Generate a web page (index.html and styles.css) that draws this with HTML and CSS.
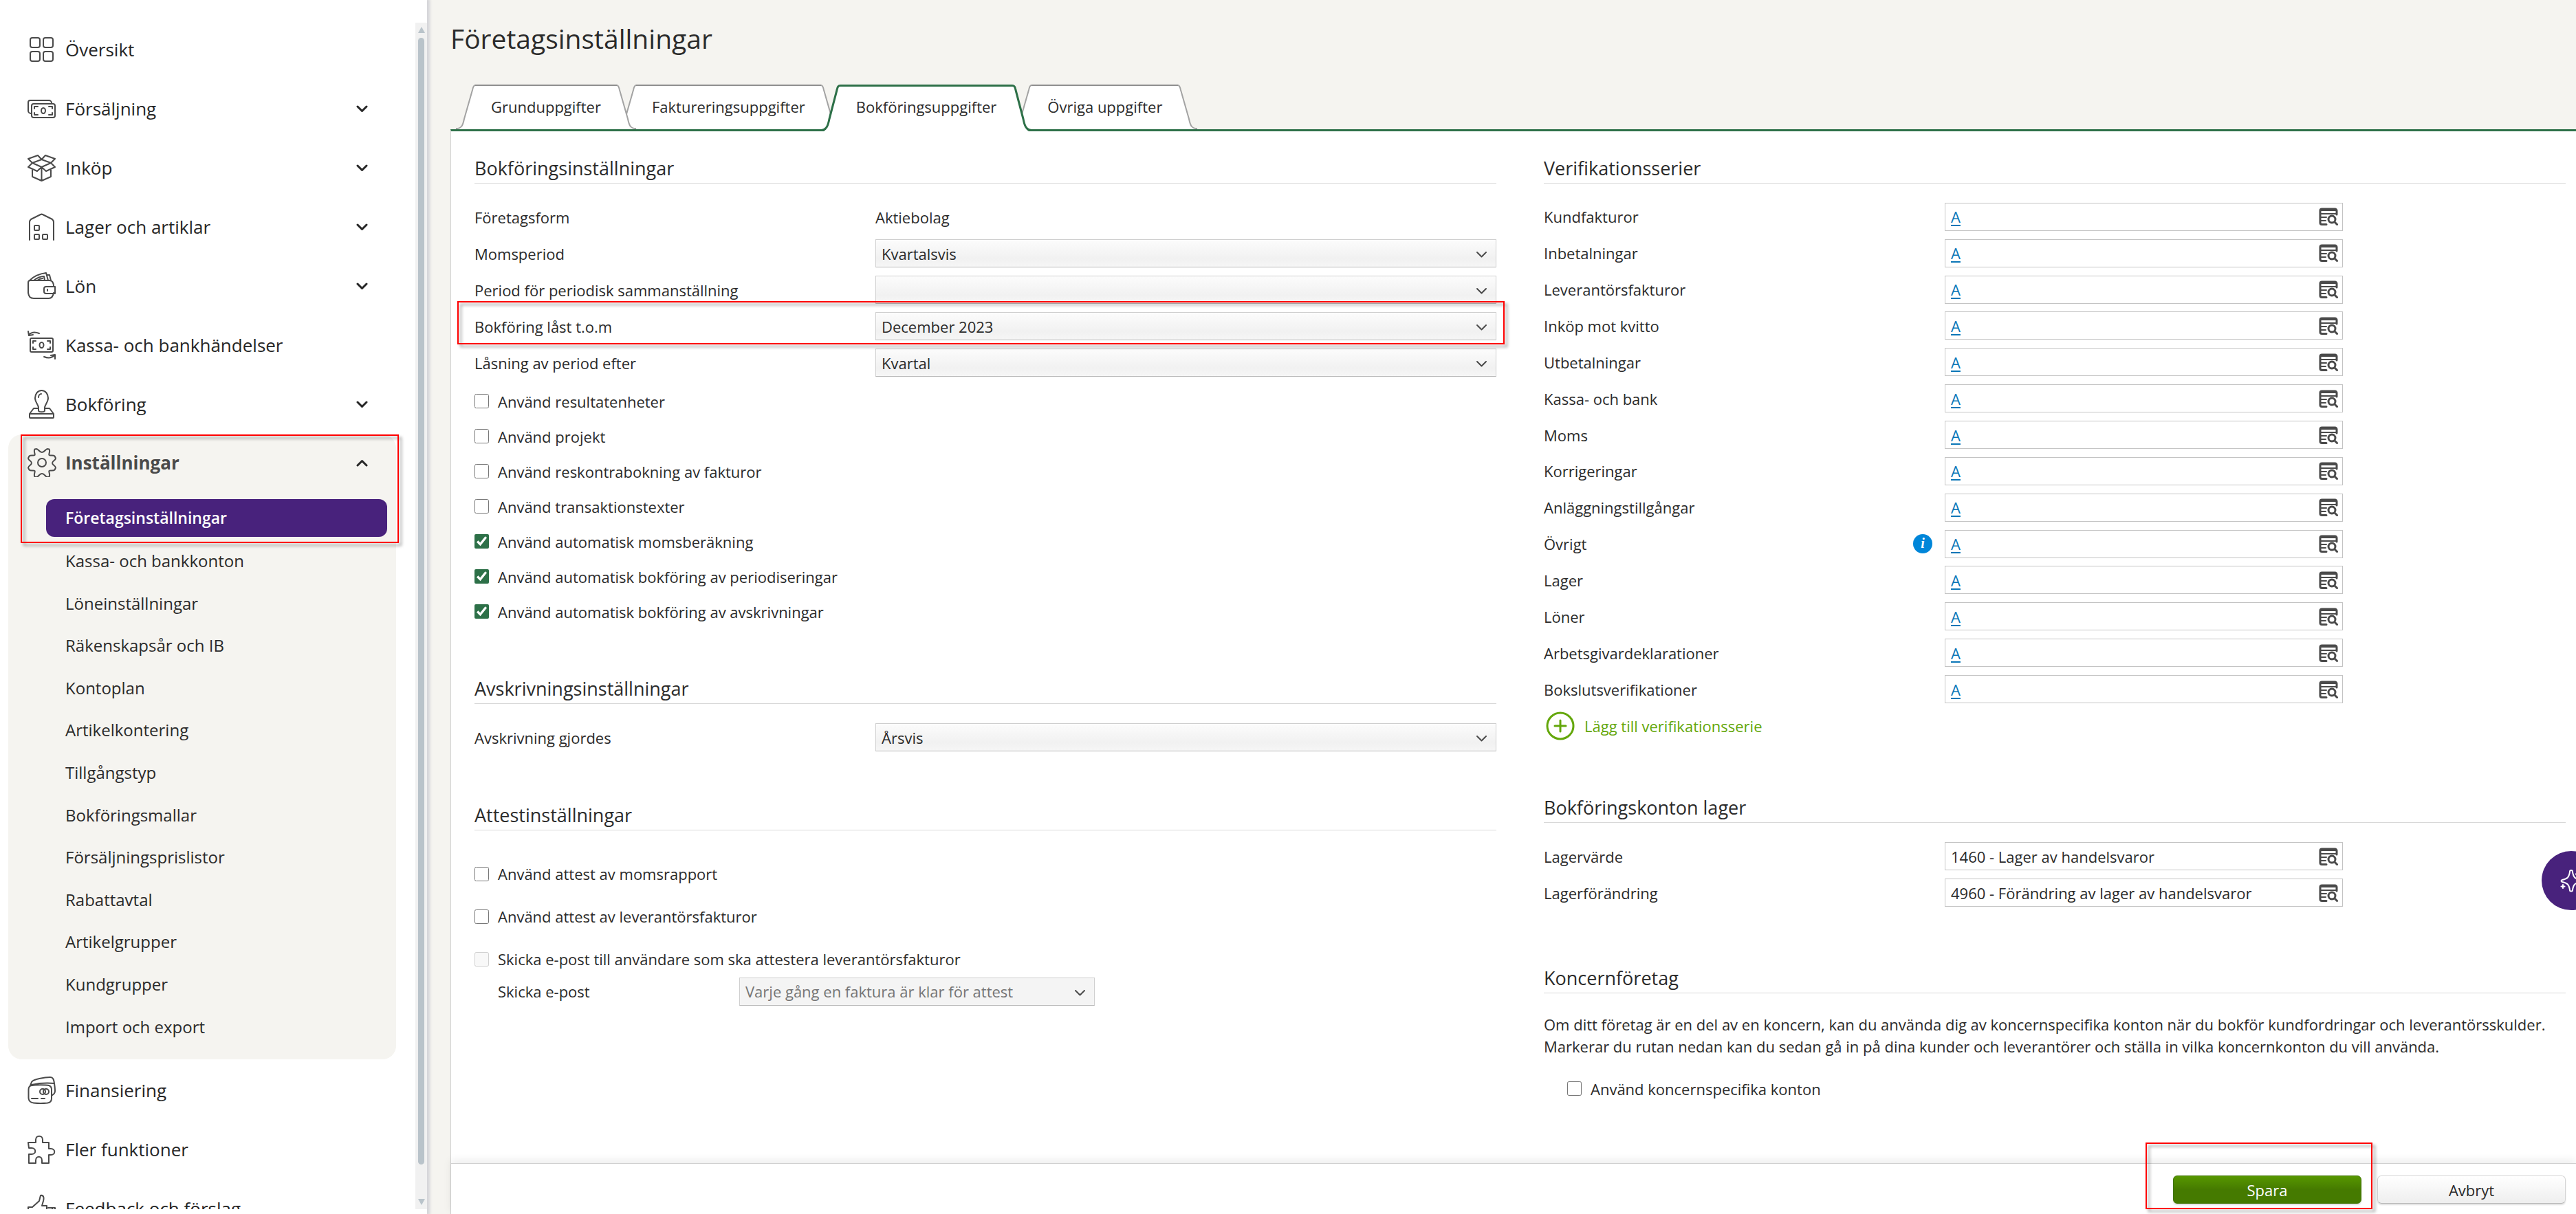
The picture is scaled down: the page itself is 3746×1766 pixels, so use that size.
FILE: index.html
```html
<!DOCTYPE html>
<html lang="sv">
<head>
    <meta charset="utf-8">
    <title>Företagsinställningar</title>
    <link rel="stylesheet" href="styles.css">
</head>
<body>
<svg class="sprite" aria-hidden="true">
    <symbol id="chevron" viewBox="0 0 17 11"><path d="M2 2l6.500 6.500L15 2"/></symbol>
    <symbol id="lookup" viewBox="0 0 28 26">
        <path stroke-width="3" d="M11 24.500H4.500A2.500 2.500 0 0 1 2 22V4.500A2.500 2.500 0 0 1 4.500 2h19A2.500 2.500 0 0 1 26 4.500V10"/>
        <path stroke-width="2" d="M2 4h24M2 9h24M2 14h9M2 19h8"/>
        <circle cx="19" cy="17" r="5" stroke-width="3"/>
        <path stroke-width="3" d="M23 21l3.500 3.500"/>
    </symbol>
</svg>

<div class="app">
    <aside class="sidebar">
        <nav class="nav">
            <a class="nav-item" href="#">
                <svg class="nav-icon" viewBox="0 0 42 42"><rect x="4" y="4" width="14" height="14" rx="3"/><rect x="23" y="4" width="14" height="14" rx="3"/><rect x="4" y="24" width="14" height="14" rx="3"/><rect x="23" y="24" width="14" height="14" rx="3"/></svg>
                <span>Översikt</span>
            </a>
            <a class="nav-item" href="#">
                <svg class="nav-icon" viewBox="0 0 42 42"><path d="M5 28a4 4 0 0 1-4-4V12a3 3 0 0 1 3-3h27a4 4 0 0 1 4 4"/><rect x="6" y="14" width="34" height="20" rx="3"/><ellipse cx="23" cy="24" rx="3" ry="4"/><path d="M10 21v-3h5M10 27v3h5M36 21v-3h-5M36 27v3h-5"/></svg>
                <span>Försäljning</span>
                <svg class="nav-chevron"><use href="#chevron"/></svg>
            </a>
            <a class="nav-item" href="#">
                <svg class="nav-icon" viewBox="0 0 42 42"><path d="M20.500 9L7 14l13.500 6L34 14zM20.500 9L15 3 1 8l6 6M20.500 9L26 3l14 5-6 6M7 14l-6 6 13 6 6.500-6M34 14l6 6-13 6-6.500-6M7 24v10l13.500 6L34 34V24M20.500 20v20"/></svg>
                <span>Inköp</span>
                <svg class="nav-chevron"><use href="#chevron"/></svg>
            </a>
            <a class="nav-item" href="#">
                <svg class="nav-icon" viewBox="0 0 42 42"><path d="M3 40V14c0-2 1-3 2-4l14-7c1-.5 2-.5 3 0l14 7c1 1 2 2 2 4v26"/><rect x="10" y="19" width="7" height="7" rx="1"/><rect x="10" y="32" width="7" height="7" rx="1"/><rect x="22" y="32" width="7" height="7" rx="1"/></svg>
                <span>Lager och artiklar</span>
                <svg class="nav-chevron"><use href="#chevron"/></svg>
            </a>
            <a class="nav-item" href="#">
                <svg class="nav-icon" viewBox="0 0 42 42"><path d="M1 16c0-2 1-3 3-3h28c4 0 6 3 6 9M38 31c-1 6-3 8-7 8H9c-5 0-7-2-8-8V16M3 13C10 6 19 3 27 2l3 11M9 13c5-4 10-6 15-6l1 6M14 13c3-2 5-3 8-3M28 5h4l2 8"/><path d="M40 22H27a3 3 0 0 0-3 3v4a3 3 0 0 0 3 3h13v-10zM29 26v2"/></svg>
                <span>Lön</span>
                <svg class="nav-chevron"><use href="#chevron"/></svg>
            </a>
            <a class="nav-item" href="#">
                <svg class="nav-icon" viewBox="0 0 42 42"><path d="M1 1l1 6 6-1M2 6c4-4 10-4 15-2M40 41V35l-6 1M39 36c-4 4-10 4-15 2"/><rect x="4" y="11" width="33" height="20" rx="2"/><ellipse cx="20.500" cy="21" rx="3" ry="4"/><path d="M8 18v-3h4M8 24v3h4M33 18v-3h-4M33 24v3h-4"/></svg>
                <span>Kassa- och bankhändelser</span>
            </a>
            <a class="nav-item" href="#">
                <svg class="nav-icon" viewBox="0 0 42 42"><path d="M16 30V26c0-4-5-8-5-14 0-6 4-11 9.500-11S30 6 30 12c0 6-5 10-5 14v4c0 3-9 3-9 0zM16 11c0-3 2-5 4-5M16 27H9L3 35v5a1 1 0 0 0 1 1h33a1 1 0 0 0 1-1v-5l-6-8h-7M3 35h35"/></svg>
                <span>Bokföring</span>
                <svg class="nav-chevron"><use href="#chevron"/></svg>
            </a>

            <div class="nav-group">
                <a class="nav-item open" href="#">
                    <svg class="nav-icon" viewBox="0 0 42 42"><path d="M10.500 1.500l2.500-.5c3 0 4 5 8 5s5-5 8-5l2.500.5c2 3-1 7 0 8.500s6-.5 8 1.500l1.500 3c0 3-5 4-5 7s5 4 5 7l-1.500 3c-2 2-7 0-8 1.500s2 5.500 0 8.500l-2.500.5c-3 0-4-5-8-5s-5 5-8 5l-2.500-.5c-2-3 1-7 0-8.500s-6 .5-8-1.500l-1.500-3c0-3 5-4 5-7s-5-4-5-7l1.500-3c2-2 7 0 8-1.500s-2-5.500 0-8.500z"/><circle cx="21" cy="21" r="6"/></svg>
                    <span>Inställningar</span>
                    <svg class="nav-chevron"><use href="#chevron"/></svg>
                </a>
                <ul class="submenu">
                    <li><a class="active" href="#">Företagsinställningar</a></li>
                    <li><a href="#">Kassa- och bankkonton</a></li>
                    <li><a href="#">Löneinställningar</a></li>
                    <li><a href="#">Räkenskapsår och IB</a></li>
                    <li><a href="#">Kontoplan</a></li>
                    <li><a href="#">Artikelkontering</a></li>
                    <li><a href="#">Tillgångstyp</a></li>
                    <li><a href="#">Bokföringsmallar</a></li>
                    <li><a href="#">Försäljningsprislistor</a></li>
                    <li><a href="#">Rabattavtal</a></li>
                    <li><a href="#">Artikelgrupper</a></li>
                    <li><a href="#">Kundgrupper</a></li>
                    <li><a href="#">Import och export</a></li>
                </ul>
                <div class="marker marker-nav"></div>
            </div>

            <a class="nav-item" href="#">
                <svg class="nav-icon" viewBox="0 0 42 42"><path d="M7 14c3-1 21-1 24 0 3 1 4 3 4 6v13c0 4-2 6-6 6.500-5 .5-15 .5-20 0-5-.5-7-2.500-7.500-7V20c0-4 2-6 5.500-6zM4 14l2-5c2-4 19-7 27-7 4 0 5 3 5.500 6 1 6 1.500 11 1.500 14s-2 5-4 6M6 13c9-2 22-3 33-2"/><circle cx="22" cy="23" r="4"/><circle cx="27" cy="23" r="4"/><path d="M6 33h9M20 33h5"/></svg>
                <span>Finansiering</span>
            </a>
            <a class="nav-item" href="#">
                <svg class="nav-icon" viewBox="0 0 42 42"><path d="M1 11h11V7c0-7 10-7 10 0v4h9v9h3c7 0 7 9 0 9h-3v12H21v-4c0-7-9-7-9 0v4H2V28h4c7 0 7-9 0-9H2z"/></svg>
                <span>Fler funktioner</span>
            </a>
            <a class="nav-item" href="#">
                <svg class="nav-icon" viewBox="0 0 42 42"><path d="M1 40V19h6l10-9 2-8c5-1 5 4 4 8l-2 7h7v10M30 20h10v20M36 20v10"/></svg>
                <span>Feedback och förslag</span>
            </a>
        </nav>
        <div class="scrollbar">
            <span class="arrow up"></span>
            <span class="thumb"></span>
            <span class="arrow down"></span>
        </div>
    </aside>

    <main class="main">
        <h1>Företagsinställningar</h1>

        <div class="tabs">
            <button class="tab">
                <svg class="cap" viewBox="0 0 28 65"><path class="fill" d="M0 65C8 64 10 60 12 50L24 8C25 3 26 1 28 1V65z"/><path d="M0 64C8 64 10 60 12 50L24 8C25 3 26 1 28 1"/></svg>
                <span>Grunduppgifter</span>
                <svg class="cap" viewBox="0 0 28 65"><path class="fill" d="M28 65C20 64 18 60 16 50L4 8C3 3 2 1 0 1V65z"/><path d="M28 64C20 64 18 60 16 50L4 8C3 3 2 1 0 1"/></svg>
            </button>
            <button class="tab">
                <svg class="cap" viewBox="0 0 28 65"><path class="fill" d="M0 65C8 64 10 60 12 50L24 8C25 3 26 1 28 1V65z"/><path d="M0 64C8 64 10 60 12 50L24 8C25 3 26 1 28 1"/></svg>
                <span>Faktureringsuppgifter</span>
                <svg class="cap" viewBox="0 0 28 65"><path class="fill" d="M28 65C20 64 18 60 16 50L4 8C3 3 2 1 0 1V65z"/><path d="M28 64C20 64 18 60 16 50L4 8C3 3 2 1 0 1"/></svg>
            </button>
            <button class="tab selected">
                <svg class="cap" viewBox="0 0 28 68"><path class="fill" d="M4 68C10 64 10 60 12 50L24 8C25 3 26 1 28 1V68z"/><path d="M0 66.500C8 66 10 60 12 50L23 8C24 3 25 1.500 28 1.500"/></svg>
                <span>Bokföringsuppgifter</span>
                <svg class="cap" viewBox="0 0 28 68"><path class="fill" d="M24 68C18 64 18 60 16 50L4 8C3 3 2 1 0 1V68z"/><path d="M28 66.500C20 66 18 60 16 50L5 8C4 3 3 1.500 0 1.500"/></svg>
            </button>
            <button class="tab">
                <svg class="cap" viewBox="0 0 28 65"><path class="fill" d="M0 65C8 64 10 60 12 50L24 8C25 3 26 1 28 1V65z"/><path d="M0 64C8 64 10 60 12 50L24 8C25 3 26 1 28 1"/></svg>
                <span>Övriga uppgifter</span>
                <svg class="cap" viewBox="0 0 28 65"><path class="fill" d="M28 65C20 64 18 60 16 50L4 8C3 3 2 1 0 1V65z"/><path d="M28 64C20 64 18 60 16 50L4 8C3 3 2 1 0 1"/></svg>
            </button>
        </div>

        <form class="card">
            <div class="columns">
                <div class="column">
                    <section>
                        <h2>Bokföringsinställningar</h2>
                        <div class="row"><span class="label">Företagsform</span><span>Aktiebolag</span></div>
                        <div class="row">
                            <label class="label" for="momsperiod">Momsperiod</label>
                            <div class="select"><select id="momsperiod"><option>Kvartalsvis</option></select><svg><use href="#chevron"/></svg></div>
                        </div>
                        <div class="row">
                            <label class="label" for="sammanstallning">Period för periodisk sammanställning</label>
                            <div class="select"><select id="sammanstallning"><option></option></select><svg><use href="#chevron"/></svg></div>
                        </div>
                        <div class="row">
                            <label class="label" for="last">Bokföring låst t.o.m</label>
                            <div class="select"><select id="last"><option>December 2023</option></select><svg><use href="#chevron"/></svg></div>
                            <div class="marker marker-row"></div>
                        </div>
                        <div class="row">
                            <label class="label" for="lasning">Låsning av period efter</label>
                            <div class="select"><select id="lasning"><option>Kvartal</option></select><svg><use href="#chevron"/></svg></div>
                        </div>
                        <div class="checks">
                            <label class="check"><input type="checkbox">Använd resultatenheter</label>
                            <label class="check"><input type="checkbox">Använd projekt</label>
                            <label class="check"><input type="checkbox">Använd reskontrabokning av fakturor</label>
                            <label class="check"><input type="checkbox">Använd transaktionstexter</label>
                            <label class="check"><input type="checkbox" checked>Använd automatisk momsberäkning</label>
                            <label class="check"><input type="checkbox" checked>Använd automatisk bokföring av periodiseringar</label>
                            <label class="check"><input type="checkbox" checked>Använd automatisk bokföring av avskrivningar</label>
                        </div>
                    </section>

                    <section>
                        <h2>Avskrivningsinställningar</h2>
                        <div class="row">
                            <label class="label" for="avskrivning">Avskrivning gjordes</label>
                            <div class="select"><select id="avskrivning"><option>Årsvis</option></select><svg><use href="#chevron"/></svg></div>
                        </div>
                    </section>

                    <section>
                        <h2>Attestinställningar</h2>
                        <div class="checks spaced">
                            <label class="check"><input type="checkbox">Använd attest av momsrapport</label>
                            <label class="check"><input type="checkbox">Använd attest av leverantörsfakturor</label>
                            <label class="check"><input type="checkbox" disabled>Skicka e-post till användare som ska attestera leverantörsfakturor</label>
                        </div>
                        <div class="row row-mail">
                            <label class="label" for="epost">Skicka e-post</label>
                            <div class="select"><select id="epost" disabled><option>Varje gång en faktura är klar för attest</option></select><svg><use href="#chevron"/></svg></div>
                        </div>
                    </section>
                </div>

                <div class="column wide-gap">
                    <section>
                        <h2>Verifikationsserier</h2>
                        <div class="series">
                            <div class="row"><span class="label">Kundfakturor</span><div class="field"><a href="#">A</a><button type="button" aria-label="Sök"><svg><use href="#lookup"/></svg></button></div></div>
                            <div class="row"><span class="label">Inbetalningar</span><div class="field"><a href="#">A</a><button type="button" aria-label="Sök"><svg><use href="#lookup"/></svg></button></div></div>
                            <div class="row"><span class="label">Leverantörsfakturor</span><div class="field"><a href="#">A</a><button type="button" aria-label="Sök"><svg><use href="#lookup"/></svg></button></div></div>
                            <div class="row"><span class="label">Inköp mot kvitto</span><div class="field"><a href="#">A</a><button type="button" aria-label="Sök"><svg><use href="#lookup"/></svg></button></div></div>
                            <div class="row"><span class="label">Utbetalningar</span><div class="field"><a href="#">A</a><button type="button" aria-label="Sök"><svg><use href="#lookup"/></svg></button></div></div>
                            <div class="row"><span class="label">Kassa- och bank</span><div class="field"><a href="#">A</a><button type="button" aria-label="Sök"><svg><use href="#lookup"/></svg></button></div></div>
                            <div class="row"><span class="label">Moms</span><div class="field"><a href="#">A</a><button type="button" aria-label="Sök"><svg><use href="#lookup"/></svg></button></div></div>
                            <div class="row"><span class="label">Korrigeringar</span><div class="field"><a href="#">A</a><button type="button" aria-label="Sök"><svg><use href="#lookup"/></svg></button></div></div>
                            <div class="row"><span class="label">Anläggningstillgångar</span><div class="field"><a href="#">A</a><button type="button" aria-label="Sök"><svg><use href="#lookup"/></svg></button></div></div>
                            <div class="row"><span class="label">Övrigt<i class="info">i</i></span><div class="field"><a href="#">A</a><button type="button" aria-label="Sök"><svg><use href="#lookup"/></svg></button></div></div>
                            <div class="row"><span class="label">Lager</span><div class="field"><a href="#">A</a><button type="button" aria-label="Sök"><svg><use href="#lookup"/></svg></button></div></div>
                            <div class="row"><span class="label">Löner</span><div class="field"><a href="#">A</a><button type="button" aria-label="Sök"><svg><use href="#lookup"/></svg></button></div></div>
                            <div class="row"><span class="label">Arbetsgivardeklarationer</span><div class="field"><a href="#">A</a><button type="button" aria-label="Sök"><svg><use href="#lookup"/></svg></button></div></div>
                            <div class="row"><span class="label">Bokslutsverifikationer</span><div class="field"><a href="#">A</a><button type="button" aria-label="Sök"><svg><use href="#lookup"/></svg></button></div></div>
                        </div>
                        <a class="add" href="#">
                            <svg viewBox="0 0 42 42"><circle cx="21" cy="21" r="19"/><path d="M21 13v16M13 21h16"/></svg>
                            Lägg till verifikationsserie
                        </a>
                    </section>

                    <section>
                        <h2>Bokföringskonton lager</h2>
                        <div class="row">
                            <label class="label" for="lagervarde">Lagervärde</label>
                            <div class="field"><input type="text" id="lagervarde" value="1460 - Lager av handelsvaror"><button type="button" aria-label="Sök"><svg><use href="#lookup"/></svg></button></div>
                        </div>
                        <div class="row">
                            <label class="label" for="lagerforandring">Lagerförändring</label>
                            <div class="field"><input type="text" id="lagerforandring" value="4960 - Förändring av lager av handelsvaror"><button type="button" aria-label="Sök"><svg><use href="#lookup"/></svg></button></div>
                        </div>
                    </section>

                    <section>
                        <h2>Koncernföretag</h2>
                        <p>Om ditt företag är en del av en koncern, kan du använda dig av koncernspecifika konton när du bokför kundfordringar och leverantörsskulder.<br>Markerar du rutan nedan kan du sedan gå in på dina kunder och leverantörer och ställa in vilka koncernkonton du vill använda.</p>
                        <label class="check indented"><input type="checkbox">Använd koncernspecifika konton</label>
                    </section>
                </div>
            </div>

            <footer class="actions">
                <div class="save">
                    <button class="btn primary" type="button">Spara</button>
                    <div class="marker marker-save"></div>
                </div>
                <button class="btn" type="button">Avbryt</button>
            </footer>
        </form>

        <button class="assistant" aria-label="Assistent">
            <svg viewBox="0 0 44 44"><path d="M22 7c1 0 2 1 2 2 1 8 3 10 11 12 2 .5 2 2.500 0 3-8 2-10 4-11 12 0 2-4 2-4 0-1-8-3-10-11-12-2-.5-2-2.500 0-3 8-2 10-4 11-12 0-1 1-2 2-2zM10 28v5M7.500 30.500h5M32 9v7M28.500 12.500h7"/></svg>
        </button>
    </main>
</div>
</body>
</html>
```
FILE: styles.css
```css
* {
    box-sizing: border-box;
}
body {
    margin: 0;
    font-family: "Open Sans", sans-serif;
    font-size: 22px;
    color: #2b2b2b;
    background-color: #f5f4f0;
}
button, input, select {
    font: inherit;
    color: inherit;
    margin: 0;
}
svg {
    flex: none;
    fill: none;
    stroke: currentColor;
    stroke-width: 2;
    stroke-linecap: round;
    stroke-linejoin: round;
}
.sprite {
    position: absolute;
    width: 0;
    height: 0;
}
.app {
    display: flex;
    height: 100vh;
    overflow: hidden;
}

/* Sidebar */
.sidebar {
    display: flex;
    flex: none;
    width: 621px;
    padding-bottom: 7px;
    background-color: white;
    box-shadow: 2px 0 4px 2px #d4d4d8;
    z-index: 2;
}
.nav {
    flex: 1;
    overflow: hidden;
    padding: 29px 28px 0 12px;
}
.nav-item {
    display: flex;
    align-items: center;
    gap: 13px;
    height: 86px;
    padding: 0 41px 0 28px;
    font-size: 26px;
    color: #262626;
    text-decoration: none;
}
.nav-icon {
    width: 42px;
    height: 42px;
    color: #4a4a4a;
}
.nav-chevron {
    width: 17px;
    height: 11px;
    margin-left: auto;
    stroke-width: 3;
}
.nav-group {
    position: relative;
    margin: 1px 0 2px;
    padding-bottom: 17px;
    border-radius: 20px;
    background-color: #f5f4f0;
}
.nav-item.open {
    height: 82px;
    font-weight: bold;
    color: #4a4a4a;
}
.open .nav-chevron {
    transform: rotate(180deg);
    color: #262626;
}
.submenu {
    display: grid;
    grid-auto-rows: 1fr;
    height: 810px;
    list-style: none;
    margin: 0;
    padding: 9px 13px 0 55px;
}
.submenu li {
    display: flex;
    align-items: center;
}
.submenu a {
    flex: 1;
    padding-left: 28px;
    line-height: 55px;
    font-size: 24px;
    color: #2b2b2b;
    text-decoration: none;
    border-radius: 12px;
}
.submenu a.active {
    font-size: 23px;
    font-weight: 600;
    color: white;
    background-color: #48227c;
}
.scrollbar {
    display: flex;
    flex-direction: column;
    align-items: center;
    width: 17px;
    margin-top: 33px;
    padding: 6px 0;
    background-color: #f1f1f1;
}
.thumb {
    flex: 1;
    width: 9px;
    margin: 7px 0 50px;
    border-radius: 5px;
    background-color: #b9c3ca;
}
.arrow {
    border: 5px solid transparent;
}
.arrow.up {
    border-top: none;
    border-bottom: 9px solid #b9c3ca;
}
.arrow.down {
    border-bottom: none;
    border-top: 9px solid #b9c3ca;
}

/* Red frames */
.marker {
    position: absolute;
    border: 2px solid #ff0000;
    filter: drop-shadow(4px 4px 2px rgba(0, 0, 0, 0.4));
    pointer-events: none;
    z-index: 3;
}
.marker-nav {
    top: 0;
    left: 18px;
    right: -4px;
    height: 158px;
}
.marker-row {
    top: -10px;
    bottom: 0;
    left: -25px;
    right: -12px;
}
.marker-save {
    top: -48px;
    bottom: -8px;
    left: -40px;
    right: -16px;
}

/* Page */
.main {
    position: relative;
    display: flex;
    flex-direction: column;
    flex: 1;
    padding: 28px 0 0 34px;
}
h1 {
    margin: 0 0 39px;
    font-size: 39px;
    font-weight: normal;
    line-height: 56px;
}
.tabs {
    display: flex;
    align-items: flex-start;
    height: 65px;
    padding-left: 8px;
}
.tab {
    position: relative;
    display: flex;
    padding: 0;
    margin-right: -28px;
    border: none;
    background: none;
    line-height: 65px;
}
.tab:nth-child(1) {
    z-index: 2;
}
.tab:nth-child(2) {
    z-index: 1;
}
.tab span {
    height: 65px;
    padding: 0 23px;
    line-height: 61px;
    background-color: white;
    border-top: 2px solid #8f8f8f;
}
.cap {
    width: 28px;
    height: 65px;
    stroke: #a3a3a3;
}
.cap .fill {
    fill: white;
    stroke: none;
}
.tab.selected {
    z-index: 3;
}
.tab.selected span {
    height: 68px;
    line-height: 59px;
    border-top: 3px solid #2d7048;
}
.selected .cap {
    height: 68px;
    stroke: #2d7048;
    stroke-width: 3;
}
.card {
    display: flex;
    flex-direction: column;
    flex: 1;
    border-top: 3px solid #2d7048;
    border-left: 1px solid #d0d0d0;
    background-color: white;
}
.columns {
    display: grid;
    grid-template-columns: 1fr 1fr;
    gap: 69px;
    flex: 1;
    padding: 36px 15px 0 34px;
}
.column {
    display: flex;
    flex-direction: column;
    gap: 69px;
}
.wide-gap {
    gap: 80px;
}
h2 {
    margin: 0 0 22px;
    padding-bottom: 3px;
    font-size: 27px;
    font-weight: normal;
    line-height: 36px;
    border-bottom: 1px solid #d8d8d8;
}
.row {
    position: relative;
    display: flex;
    align-items: center;
    height: 53px;
}
.series {
    display: grid;
    grid-auto-rows: 1fr;
    height: 740px;
}
.series .row {
    height: auto;
}
.label {
    display: flex;
    align-items: center;
    justify-content: space-between;
    flex: none;
    width: 583px;
    padding-right: 18px;
}
.select {
    position: relative;
    flex: 1;
}
.select select {
    display: block;
    width: 100%;
    height: 41px;
    padding: 0 8px;
    appearance: none;
    border: 1px solid #cfcfcf;
    border-bottom-color: #b8b8b8;
    border-radius: 0;
    background: linear-gradient(#fcfcfc, #f1f1f1 70%, #f6f6f6);
}
.select select:disabled {
    color: #757575;
    opacity: 1;
    background: #f4f4f4;
}
.select svg {
    position: absolute;
    top: 17px;
    right: 13px;
    width: 17px;
    height: 11px;
    color: #4a4a4a;
    pointer-events: none;
}
.checks {
    display: flex;
    flex-direction: column;
    padding-top: 4px;
}
.check {
    display: flex;
    align-items: center;
    gap: 13px;
    height: 51px;
}
.check input {
    width: 21px;
    height: 21px;
    accent-color: #2d7048;
}
.spaced {
    gap: 18px;
    padding-top: 19px;
}
.spaced .check {
    height: 44px;
}
.row-mail {
    height: 50px;
    padding-left: 34px;
}
.row-mail .label {
    width: 351px;
}
.row-mail .select {
    flex: none;
    width: 517px;
}
.field {
    display: flex;
    align-items: center;
    width: 579px;
    height: 41px;
    padding: 0 6px 0 8px;
    border: 1px solid #c4c4c4;
}
.field a {
    color: #0a76b7;
    text-decoration-thickness: 2px;
    text-underline-offset: 3px;
}
.field input {
    flex: 1;
    padding: 0;
    border: none;
    outline: none;
    background: none;
}
.field button {
    display: flex;
    margin-left: auto;
    padding: 0;
    border: none;
    background: none;
    color: #4a4a4a;
}
.field svg {
    width: 28px;
    height: 26px;
}
.info {
    width: 28px;
    height: 28px;
    border-radius: 50%;
    background-color: #0086d9;
    color: white;
    font-family: "Liberation Serif", serif;
    font-size: 20px;
    font-weight: bold;
    line-height: 27px;
    text-align: center;
}
.add {
    display: flex;
    align-items: center;
    gap: 14px;
    margin-top: 6px;
    padding-left: 3px;
    color: #64a70b;
    text-decoration: none;
}
.add svg {
    width: 42px;
    height: 42px;
    stroke-width: 3;
}
.column p {
    margin: 29px 0 20px;
    line-height: 32px;
}
.indented {
    margin-left: 34px;
}
.actions {
    position: relative;
    display: flex;
    justify-content: flex-end;
    gap: 23px;
    padding: 17px 15px 15px;
    border-top: 1px solid #d0d0d0;
    background-color: white;
    box-shadow: 0 -4px 12px rgba(0, 0, 0, 0.08);
}
.save {
    position: relative;
}
.btn {
    width: 274px;
    height: 41px;
    padding: 0;
    border: 1px solid #d4d4d4;
    border-bottom-color: #b8b8b8;
    border-radius: 6px;
    background: linear-gradient(#ffffff, #eeeeee);
    box-shadow: 0 2px 2px rgba(0, 0, 0, 0.12);
}
.btn.primary {
    color: white;
    border-color: #3f7300;
    background: linear-gradient(#579700, #457a00 50%);
}
.assistant {
    position: absolute;
    top: 1238px;
    right: -36px;
    width: 86px;
    height: 86px;
    padding: 21px;
    border: none;
    border-radius: 50%;
    background-color: #48227c;
    color: white;
}
.assistant svg {
    display: block;
    width: 44px;
    height: 44px;
}
```
